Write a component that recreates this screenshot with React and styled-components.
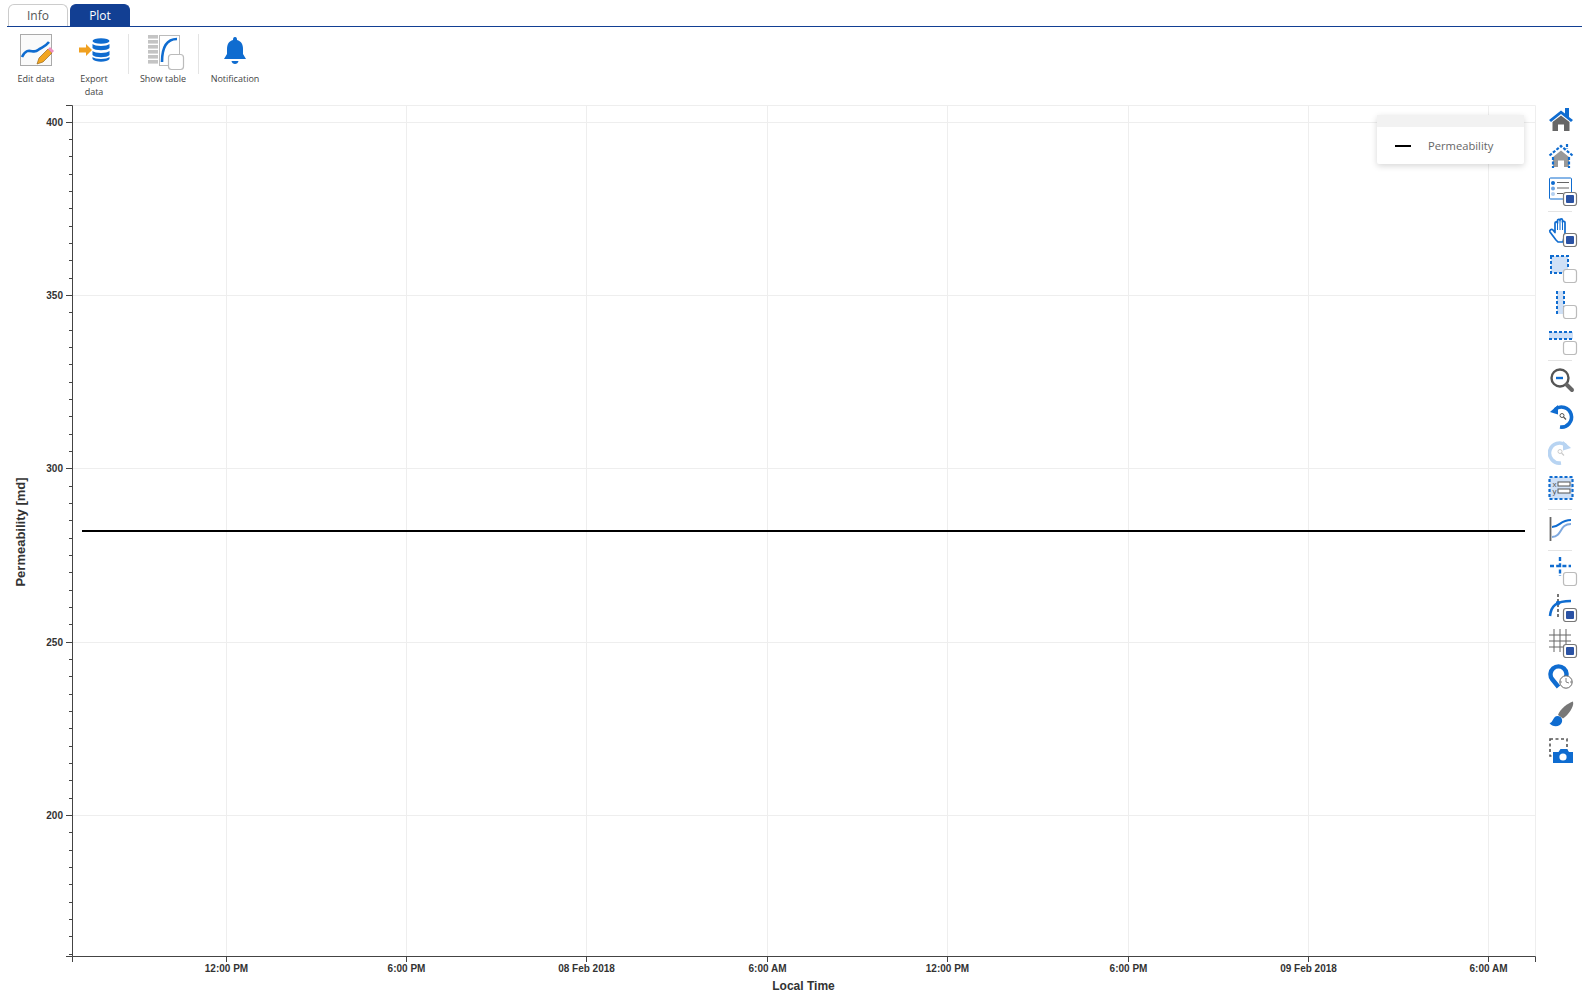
import styled, { createGlobalStyle } from "styled-components";

const BLUE = "#0f6cd0";
const LIGHT = "#cfe0f6";
const GRAY = "#666";

const GlobalStyle = createGlobalStyle`
  html, body {
    margin: 0;
    background: #fff;
  }
  body {
    font-family: "Open Sans", "Liberation Sans", sans-serif;
    overflow: hidden;
  }
`;

const Page = styled.div`
  width: 1588px;
  height: 1001px;
  display: flex;
  flex-direction: column;
`;

const Tabs = styled.div`
  height: 22px;
  margin: 0 6px 0 7px;
  padding: 4px 0 0 1px;
  display: flex;
  gap: 2px;
  border-bottom: 1px solid #123f93;
`;

const Tab = styled.div`
  width: 58px;
  border: 1px solid ${(p) => (p.$active ? "#123f93" : "#ccc")};
  border-bottom: none;
  border-radius: 6px 6px 0 0;
  background: ${(p) => (p.$active ? "#123f93" : "#fff")};
  color: ${(p) => (p.$active ? "#fff" : "#555")};
  font-size: 12px;
  line-height: 22px;
  text-align: center;
`;

const Toolbar = styled.div`
  height: 78px;
  padding: 6px 0 0 7px;
  box-sizing: border-box;
  display: flex;
  align-items: flex-start;
`;

const ToolItem = styled.div`
  width: ${(p) => p.$width}px;
  display: flex;
  flex-direction: column;
  align-items: center;
  font-size: 9px;
  line-height: 13px;
  color: #444;
  text-align: center;

  svg {
    overflow: visible;
  }
`;

const ToolLabel = styled.div`
  margin-top: 3px;
  width: 54px;
  white-space: nowrap;
  display: flex;
  flex-direction: column;
  align-items: center;
`;

const ToolSep = styled.div`
  width: 1px;
  height: 40px;
  margin: 1px ${(p) => p.$right}px 0 ${(p) => p.$left}px;
  background: #e4e4e4;
`;

const PlotRow = styled.div`
  flex: 1;
  display: flex;
`;

const ChartWrap = styled.div`
  position: relative;
  width: 1540px;
`;

const Legend = styled.div`
  position: absolute;
  top: 10px;
  left: 1377px;
  width: 147px;
  height: 49px;
  background: #fff;
  box-shadow: 0 2px 6px rgba(0, 0, 0, 0.16);
  border-radius: 2px;
`;

const LegendHead = styled.div`
  height: 12px;
  background: #f2f2f2;
`;

const LegendRow = styled.div`
  height: 37px;
  display: flex;
  align-items: center;
  padding-left: 18px;
  gap: 17px;
  font-size: 11.2px;
  color: #666;
`;

const LegendSwatch = styled.span`
  width: 16px;
  height: 2px;
  background: #000;
`;

const SideBar = styled.div`
  width: 48px;
  margin-top: -4px;
  padding-left: 8px;
  display: flex;
  flex-direction: column;
  align-items: flex-start;
`;

const SideBtn = styled.div`
  height: 36px;
  display: flex;
  align-items: center;
`;

const SideSep = styled.div`
  width: 24px;
  height: 1px;
  margin: 2px 0;
  background: #e4e4e4;
`;

// bottom right box on the toggle tools
const Check = ({ on }) => (
  <rect x="15.5" y="16.5" width="13" height="13" rx="2.5" fill="#fff" stroke={on ? "#777" : "#bbb"} strokeWidth="1.2" />
);
const CheckFill = () => <rect x="18" y="19" width="8" height="8" rx="1" fill="#2a52a4" />;

const sideIcons = [
  <>
    <path d="M13 6.5 L1 16 L3 18 L13 10 L23 18 L25 16 L21 13 V4 H17 V9.5 Z" fill={BLUE} />
    <path d="M4.5 18 L13 11.5 L21.5 18 V27 H16 V20.5 H10 V27 H4.5 Z" fill={GRAY} />
  </>,
  <>
    <path d="M5 17 L13 10.5 L21 17 V27 H16 V20.5 H10 V27 H5 Z" fill="#999" />
    <path d="M1.5 15.5 L13 6 L24.5 15.5 M19 4 V9 M5 17 V28 M21 17 V28" fill="none" stroke={BLUE} strokeWidth="2.2" strokeDasharray="3 1.5" />
  </>,
  <>
    <rect x="1.5" y="2" width="22" height="21" rx="1" fill="#fff" stroke={BLUE} strokeWidth="1" />
    <circle cx="5" cy="7" r="2" fill={BLUE} />
    <circle cx="5" cy="12.5" r="2" fill="#6aa3e3" />
    <circle cx="5" cy="18" r="2" fill="#b4d0f1" />
    <path d="M9 6.5 H21 M9 12 H21 M9 17.5 H15" stroke="#666" strokeWidth="1" />
    <Check on /><CheckFill />
  </>,
  <>
    <path d="M8 23 L2 15 C1 13 3.5 11.5 5 13 L7 15.5 V6 C7 4.5 9.5 4.5 9.5 6 V3.5 C9.5 2 12 2 12 3.5 V3 C12 1.5 14.5 1.5 14.5 3 V5 C14.5 4 17 4 17 5.5 V16 L15 25 H10 Z" fill="#fff" stroke={BLUE} strokeWidth="1.7" strokeLinejoin="round" />
    <path d="M9.5 6 V13 M12 4 V13 M14.5 5 V13" stroke={BLUE} strokeWidth="1" />
    <Check on /><CheckFill />
  </>,
  <>
    <rect x="3" y="3" width="17" height="17" fill={LIGHT} stroke={BLUE} strokeWidth="2" strokeDasharray="3 2" />
    <Check />
  </>,
  <>
    <rect x="9" y="2" width="7" height="23" fill={LIGHT} />
    <path d="M9 2 V25 M16 2 V25" stroke={BLUE} strokeWidth="2" strokeDasharray="3 2" />
    <Check />
  </>,
  <>
    <rect x="1" y="7" width="24" height="7" fill={LIGHT} />
    <path d="M1 7 H25 M1 14 H25" stroke={BLUE} strokeWidth="2" strokeDasharray="3 2" />
    <Check />
  </>,
  <>
    <circle cx="12" cy="12" r="8.5" fill="#fff" stroke="#555" strokeWidth="2.4" />
    <path d="M8 12 H15" stroke={BLUE} strokeWidth="2.4" />
    <path d="M18.5 18.5 L24 24" stroke="#666" strokeWidth="4" strokeLinecap="round" />
  </>,
  <>
    <path d="M7 7.5 A10 10 0 1 1 12 25" fill="none" stroke={BLUE} strokeWidth="3.6" />
    <path d="M2 10 L10 3 V12.5 Z" fill={BLUE} />
    <circle cx="14" cy="13.5" r="2" fill="none" stroke="#555" strokeWidth="1" />
    <path d="M15.5 15 L18 17.5" stroke="#555" strokeWidth="1.2" />
  </>,
  <>
    <path d="M18 7.5 A10 10 0 1 0 13 25" fill="none" stroke="#b8d4f2" strokeWidth="3.6" />
    <path d="M23 10 L15 3 V12.5 Z" fill="#b8d4f2" />
    <circle cx="12" cy="13.5" r="2" fill="none" stroke="#ccc" strokeWidth="1" />
    <path d="M13.5 15 L16 17.5" stroke="#ccc" strokeWidth="1.2" />
  </>,
  <>
    <rect x="1.5" y="3" width="23" height="22" fill={LIGHT} stroke={BLUE} strokeWidth="2.2" strokeDasharray="3 2" />
    <rect x="10" y="8" width="12" height="4" fill="#fff" stroke="#555" strokeWidth="1" />
    <rect x="10" y="15" width="12" height="4" fill="#fff" stroke="#555" strokeWidth="1" />
    <text x="4.5" y="13" fontFamily="Liberation Sans" fontSize="8" fill="#555">x</text>
    <text x="4.5" y="20" fontFamily="Liberation Sans" fontSize="8" fill="#555">y</text>
  </>,
  <>
    <path d="M2.5 2 V26" stroke="#666" strokeWidth="1.8" />
    <path d="M4 12 C12 12 12 5 23 5" fill="none" stroke={BLUE} strokeWidth="2" />
    <path d="M4 22 C15 21 11 9 23 9" fill="none" stroke="#7fa9df" strokeWidth="2" />
  </>,
  <>
    <path d="M12 1 V20 M2 10 H23" stroke={BLUE} strokeWidth="2.4" strokeDasharray="4 2.2" />
    <Check />
  </>,
  <>
    <path d="M10 2 V25" stroke="#666" strokeWidth="1.8" strokeDasharray="3 2" />
    <path d="M2 24 C3 14 8 9 23 9" fill="none" stroke={BLUE} strokeWidth="2.6" />
    <circle cx="10" cy="11" r="2.2" fill={BLUE} />
    <Check on /><CheckFill />
  </>,
  <>
    <path d="M1 7 H23 M1 13 H23 M1 19 H17 M6 1 V24 M12 1 V24 M18 1 V17" stroke="#666" strokeWidth="1" />
    <Check on /><CheckFill />
  </>,
  <>
    <path d="M10.5 23 L4 15 A8 8 0 1 1 17 15" fill="none" stroke={BLUE} strokeWidth="4.4" strokeLinejoin="round" />
    <circle cx="18" cy="18" r="6.2" fill="#fff" stroke="#666" strokeWidth="1" />
    <path d="M18 14 V18 L21 19 M12 18 H14 M22 18 H24" fill="none" stroke="#666" strokeWidth="0.8" />
  </>,
  <>
    <path d="M10 15 C12 9 20 3 25 1.5 C26.5 7 20 15 15 18.5 Z" fill="#777" />
    <path d="M1.5 23 C5 23 5 16 9.5 16 C12 15.5 15 18.5 14 22 C12 27.5 4.5 27.5 1.5 23 Z" fill={BLUE} />
  </>,
  <>
    <rect x="2" y="3" width="17" height="17" fill="none" stroke="#555" strokeWidth="1.6" strokeDasharray="3 2.5" />
    <path d="M5 27 V16 H10.5 L12.5 13 H19 L21 16 H25 V27 Z" fill={BLUE} />
    <circle cx="15" cy="21" r="3.6" fill="#fff" />
  </>,
];

const sideLayout = [0, 1, 2, "a", 3, 4, 5, 6, "b", 7, 8, 9, 10, "c", 11, "d", 12, 13, 14, 15, 16, 17];

const SideIcon = ({ children }) => (
  <svg width="30" height="30" viewBox="0 0 30 30">
    {children}
  </svg>
);

const EditIcon = () => (
  <svg width="40" height="36" viewBox="0 0 40 36">
    <rect x="4.5" y="1.5" width="31" height="31" fill="#fafafa" stroke="#aaa" />
    <path d="M6 24 C12 12 17 22 22 17 C26 14 29 14 33 9" fill="none" stroke={BLUE} strokeWidth="2.6" />
    <path d="M21 31 L23 25 L32 16 L36 20 L27 29 Z" fill="#f2a51f" stroke="#8a5a10" strokeWidth="0.6" />
    <path d="M32 16 L34 14 L38 18 L36 20 Z" fill="#f08fc0" />
  </svg>
);

const ExportIcon = () => (
  <svg width="40" height="36" viewBox="0 0 40 36">
    <path d="M5 14.5 H12 V11 L18 17 L12 23 V19.5 H5 Z" fill="#f0a020" />
    <ellipse cx="27" cy="8" rx="8.5" ry="2.8" fill={BLUE} />
    <path d="M18.5 11 C21 13.5 33 13.5 35.5 11 V15 C33 18 21 18 18.5 15 Z" fill={BLUE} />
    <path d="M18.5 18 C21 20.5 33 20.5 35.5 18 V22 C33 25 21 25 18.5 22 Z" fill={BLUE} />
    <path d="M18.5 24 C21 26.5 33 26.5 35.5 24 V26 C33 29.5 21 29.5 18.5 26 Z" fill={BLUE} />
  </svg>
);

const TableIcon = () => (
  <svg width="40" height="36" viewBox="0 0 40 36">
    {[3, 8, 13, 18, 23, 28].map((y) => (
      <rect key={y} x="5" y={y - 1} width="10" height="3.6" fill="#c4c4c4" />
    ))}
    <rect x="16.5" y="2.5" width="20" height="30" fill="#fff" stroke="#bbb" />
    <path d="M19 29 C19 15 23 6 34 6" fill="none" stroke={BLUE} strokeWidth="2.6" />
    <rect x="25.5" y="21.5" width="15" height="15" rx="3" fill="#fff" stroke="#bbb" strokeWidth="1.2" />
  </svg>
);

const BellIcon = () => (
  <svg width="40" height="36" viewBox="0 0 40 36">
    <path d="M20 4 C22 4 22 6 22 7 C26 8 28 11 28 16 V21 L31 26 H9 L12 21 V16 C12 11 14 8 18 7 C18 6 18 4 20 4 Z" fill={BLUE} />
    <path d="M16.5 28 H23.5 C23 32 17 32 16.5 28 Z" fill={BLUE} />
  </svg>
);

// chart geometry
const LEFT = 72.5;
const RIGHT = 1535.5;
const TOP = 0.5; // relative to plot top (y=105)
const BOTTOM = 851.5;
const yOf = (v) => 363.4 + (300 - v) * 3.467;

const xTicks = [
  [226.5, "12:00 PM"],
  [406.5, "6:00 PM"],
  [586.5, "08 Feb 2018"],
  [767.5, "6:00 AM"],
  [947.5, "12:00 PM"],
  [1128.5, "6:00 PM"],
  [1308.5, "09 Feb 2018"],
  [1488.5, "6:00 AM"],
];
const yMajor = [400, 350, 300, 250, 200];
const yMinor = [];
for (let v = 160; v <= 430; v += 5) {
  if (v % 50 !== 0 && yOf(v) > TOP + 2 && yOf(v) < BOTTOM - 2) yMinor.push(v);
}

const AxisText = styled.text`
  font-family: "Liberation Sans", Arial, sans-serif;
  font-weight: bold;
  font-size: ${(p) => p.$size}px;
  fill: #333;
`;

const Chart = () => (
  <svg width="1540" height="896" viewBox="0 0 1540 896" style={{ display: "block" }}>
    <path d={`M${LEFT} ${TOP} H${RIGHT} V${BOTTOM}`} fill="none" stroke="#eee" />
    {xTicks.map(([x]) => (
      <path key={x} d={`M${x} ${TOP} V${BOTTOM}`} stroke="#eee" />
    ))}
    {yMajor.map((v) => (
      <path key={v} d={`M${LEFT} ${Math.round(yOf(v)) + 0.5} H${RIGHT}`} stroke="#eee" />
    ))}
    <path d="M82 426 H1525" stroke="#000" strokeWidth="2" />
    <path d={`M${LEFT} ${TOP} V${BOTTOM} H${RIGHT}`} fill="none" stroke="#444" strokeWidth="1" />
    <path d={`M66 ${TOP} H${LEFT} M66 ${BOTTOM} H${LEFT} M${LEFT} ${BOTTOM} V857 M${RIGHT} ${BOTTOM} V857`} stroke="#444" fill="none" />
    {yMajor.map((v) => (
      <g key={v}>
        <path d={`M66 ${Math.round(yOf(v)) + 0.5} H${LEFT}`} stroke="#444" />
        <AxisText $size={10} x="63" y={Math.round(yOf(v)) + 4} textAnchor="end">
          {v}
        </AxisText>
      </g>
    ))}
    {yMinor.map((v) => (
      <path key={v} d={`M69 ${Math.round(yOf(v)) + 0.5} H${LEFT}`} stroke="#444" />
    ))}
    {xTicks.map(([x, label]) => (
      <g key={x}>
        <path d={`M${x} ${BOTTOM} V857`} stroke="#444" />
        <AxisText $size={10} x={x} y="866.5" textAnchor="middle">
          {label}
        </AxisText>
      </g>
    ))}
    <AxisText $size={12} x="803.5" y="885" textAnchor="middle">
      Local Time
    </AxisText>
    <AxisText $size={13} textAnchor="middle" transform="translate(24.5 427) rotate(-90)">
      Permeability [md]
    </AxisText>
  </svg>
);

export default function App() {
  return (
    <Page>
      <GlobalStyle />
      <Tabs>
        <Tab>Info</Tab>
        <Tab $active>Plot</Tab>
      </Tabs>
      <Toolbar>
        <ToolItem $width={58}>
          <EditIcon />
          <ToolLabel>Edit data</ToolLabel>
        </ToolItem>
        <ToolItem $width={58}>
          <ExportIcon />
          <ToolLabel>
            <span>Export</span>
            <span>data</span>
          </ToolLabel>
        </ToolItem>
        <ToolSep $left={5} $right={3} />
        <ToolItem $width={62}>
          <TableIcon />
          <ToolLabel>Show table</ToolLabel>
        </ToolItem>
        <ToolSep $left={4} $right={2} />
        <ToolItem $width={68}>
          <BellIcon />
          <ToolLabel>Notification</ToolLabel>
        </ToolItem>
      </Toolbar>
      <PlotRow>
        <ChartWrap>
          <Chart />
          <Legend>
            <LegendHead />
            <LegendRow>
              <LegendSwatch />
              Permeability
            </LegendRow>
          </Legend>
        </ChartWrap>
        <SideBar>
          {sideLayout.map((item, i) =>
            typeof item === "string" ? (
              <SideSep key={i} />
            ) : (
              <SideBtn key={i}>
                <SideIcon>{sideIcons[item]}</SideIcon>
              </SideBtn>
            )
          )}
        </SideBar>
      </PlotRow>
    </Page>
  );
}
